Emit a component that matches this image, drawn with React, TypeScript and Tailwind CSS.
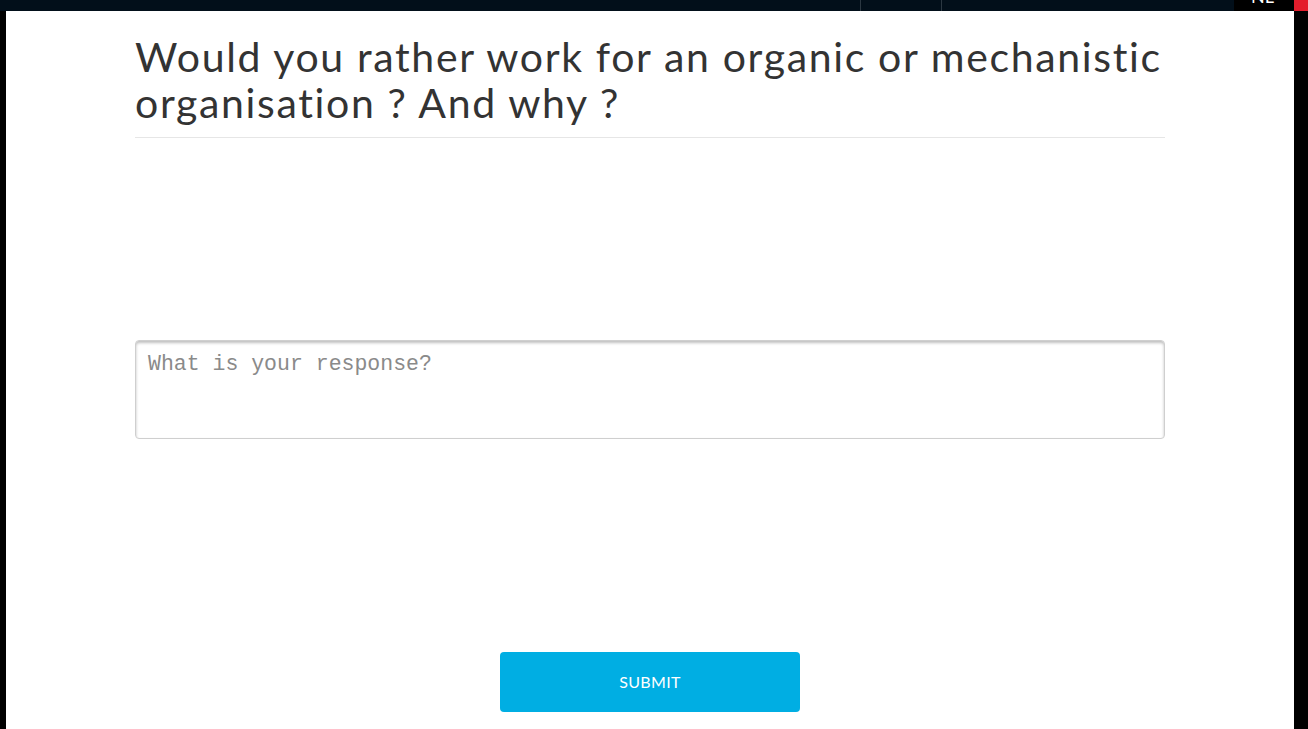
export default function App() {
  return (
    <div className="w-[1308px] h-[729px] overflow-hidden bg-black flex flex-col font-['Lato',sans-serif]">
      <div className="h-[11px] flex bg-[#020f1a] shrink-0">
        <div className="w-[860px]" />
        <div className="w-[81px] border-l border-[#2c3842]" />
        <div className="w-[293px] border-l border-[#2c3842]" />
        <div className="w-[60px] bg-black relative overflow-hidden">
          <span className="absolute left-[17px] -top-[13px] text-white text-[18px] leading-none">NL</span>
        </div>
        <div className="w-[14px] bg-[#e41d2c]" />
      </div>
      <div className="flex flex-1">
        <div className="w-[6px]" />
        <main className="flex-1 bg-white flex flex-col items-center">
          <div className="w-[1030px] flex flex-col">
            <h1 className="mt-[23px] text-[41px] leading-[46px] text-[#333] font-normal tracking-[1.65px] pb-[11px] border-b border-[#e6e6e6]">
              Would you rather work for an organic or mechanistic organisation ? And why ?
            </h1>
            <textarea
              placeholder="What is your response?"
              className="mt-[202px] h-[99px] w-full resize-none rounded-[4px] border border-[#cfcfcf] shadow-[inset_0_2px_3px_rgba(0,0,0,0.25)] px-[12px] py-[10px] font-['Liberation_Mono',monospace] text-[21.5px] leading-[26px] text-[#333] placeholder:text-[#8a8a8a] outline-none"
            />
            <div className="flex justify-center mt-[213px]">
              <button className="w-[300px] h-[60px] rounded-[4px] bg-[#00aee3] text-white text-[16px] font-normal tracking-[0.3px] uppercase">
                Submit
              </button>
            </div>
          </div>
        </main>
        <div className="w-[14px]" />
      </div>
    </div>
  );
}
